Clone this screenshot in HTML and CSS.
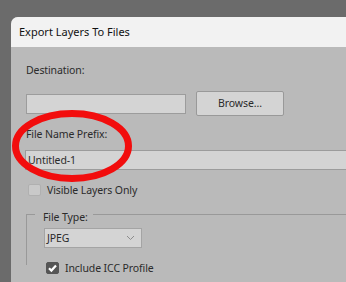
FILE: index.html
```html
<!DOCTYPE html>
<html>
<head>
<meta charset="utf-8">
<title>Export Layers To Files</title>
<link rel="stylesheet" href="styles.css">
</head>
<body>
<div class="dialog">
  <div class="titlebar">Export Layers To Files</div>
  <div class="content">
    <div class="label label-dest">Destination:</div>
    <div class="row-dest">
      <div class="field field-dest"></div>
      <div class="btn">Browse...</div>
    </div>
    <div class="label label-prefix">File Name Prefix:</div>
    <div class="field field-prefix">Untitled-1</div>
    <div class="check-row check-visible">
      <span class="box"></span>
      <span class="check-label">Visible Layers Only</span>
    </div>
    <fieldset class="group">
      <legend>File Type:</legend>
      <div class="select">
        <span>JPEG</span>
        <svg class="chev" width="9" height="6" viewBox="0 0 9 6"><path d="M1 1l3.5 3.5L8 1" fill="none" stroke="#8c8c8c" stroke-width="1"/></svg>
      </div>
      <div class="check-row check-icc">
        <span class="box box-on">
          <svg width="13" height="12" viewBox="0 0 13 12"><path d="M3 6.2l2.4 2.4L10 3.6" fill="none" stroke="#fff" stroke-width="2.2"/></svg>
        </span>
        <span class="check-label">Include ICC Profile</span>
      </div>
    </fieldset>
  </div>
</div>
<svg class="mark" width="346" height="282" viewBox="0 0 346 282">
  <ellipse cx="72" cy="146" rx="56.5" ry="32.5" fill="none" stroke="#f20d0d" stroke-width="7"/>
</svg>
</body>
</html>
```

FILE: styles.css
```css
html,body{margin:0;padding:0;}
body{background:#6b6b6b;width:346px;height:282px;overflow:hidden;padding:17px 0 0 11px;box-sizing:border-box;font-family:"Noto Sans","Open Sans",sans-serif;position:relative;}
.dialog{width:335px;height:265px;background:#bababa;border-top-left-radius:7px;overflow:hidden;}
.titlebar{height:30px;line-height:30px;background:#f2f2f2;padding-left:8px;font-size:11px;color:#111;}
.content{padding:0 0 0 15px;color:#2b2b2b;font-size:10.5px;letter-spacing:-0.1px;}
.label{line-height:14px;}
.label-dest{padding-top:16px;}
.row-dest{display:flex;align-items:center;margin-top:14px;gap:10px;}
.field{box-sizing:border-box;height:20px;background:#d4d4d4;border:1px solid #9c9c9c;}
.field-dest{width:160px;}
.btn{box-sizing:border-box;width:88px;height:25px;line-height:23px;text-align:center;background:#d4d4d4;border:1px solid #999;border-radius:2px;}
.label-prefix{margin-top:11px;}
.field-prefix{margin-top:9px;margin-left:-1px;margin-right:-2px;line-height:18px;padding-left:2px;}
.check-row{display:flex;align-items:center;gap:6px;}
.check-visible{margin-top:13px;margin-left:2px;}
.box{box-sizing:border-box;width:13px;height:12px;background:#c9c9c9;border:1px solid #b0b0b0;border-radius:2px;display:flex;}
.box-on{background:#555;border-color:#555;}
.box-on svg{margin:-1px;}
.check-label{line-height:14px;}
.group{margin:7px -2px 0 0;padding:0 0 0 17px;border:none;border-top:1px solid #999;border-left:1px solid #999;height:60px;}
.group legend{padding:6px 5px 0 8px;margin-left:-9px;line-height:14px;}
.select{box-sizing:border-box;width:98px;height:20px;margin-top:4px;background:#d4d4d4;border:1px solid #a4a4a4;display:flex;align-items:center;justify-content:space-between;padding:0 6px 0 2px;}
.check-icc{margin-top:13px;margin-left:2px;}
.mark{position:absolute;left:0;top:0;}
```
